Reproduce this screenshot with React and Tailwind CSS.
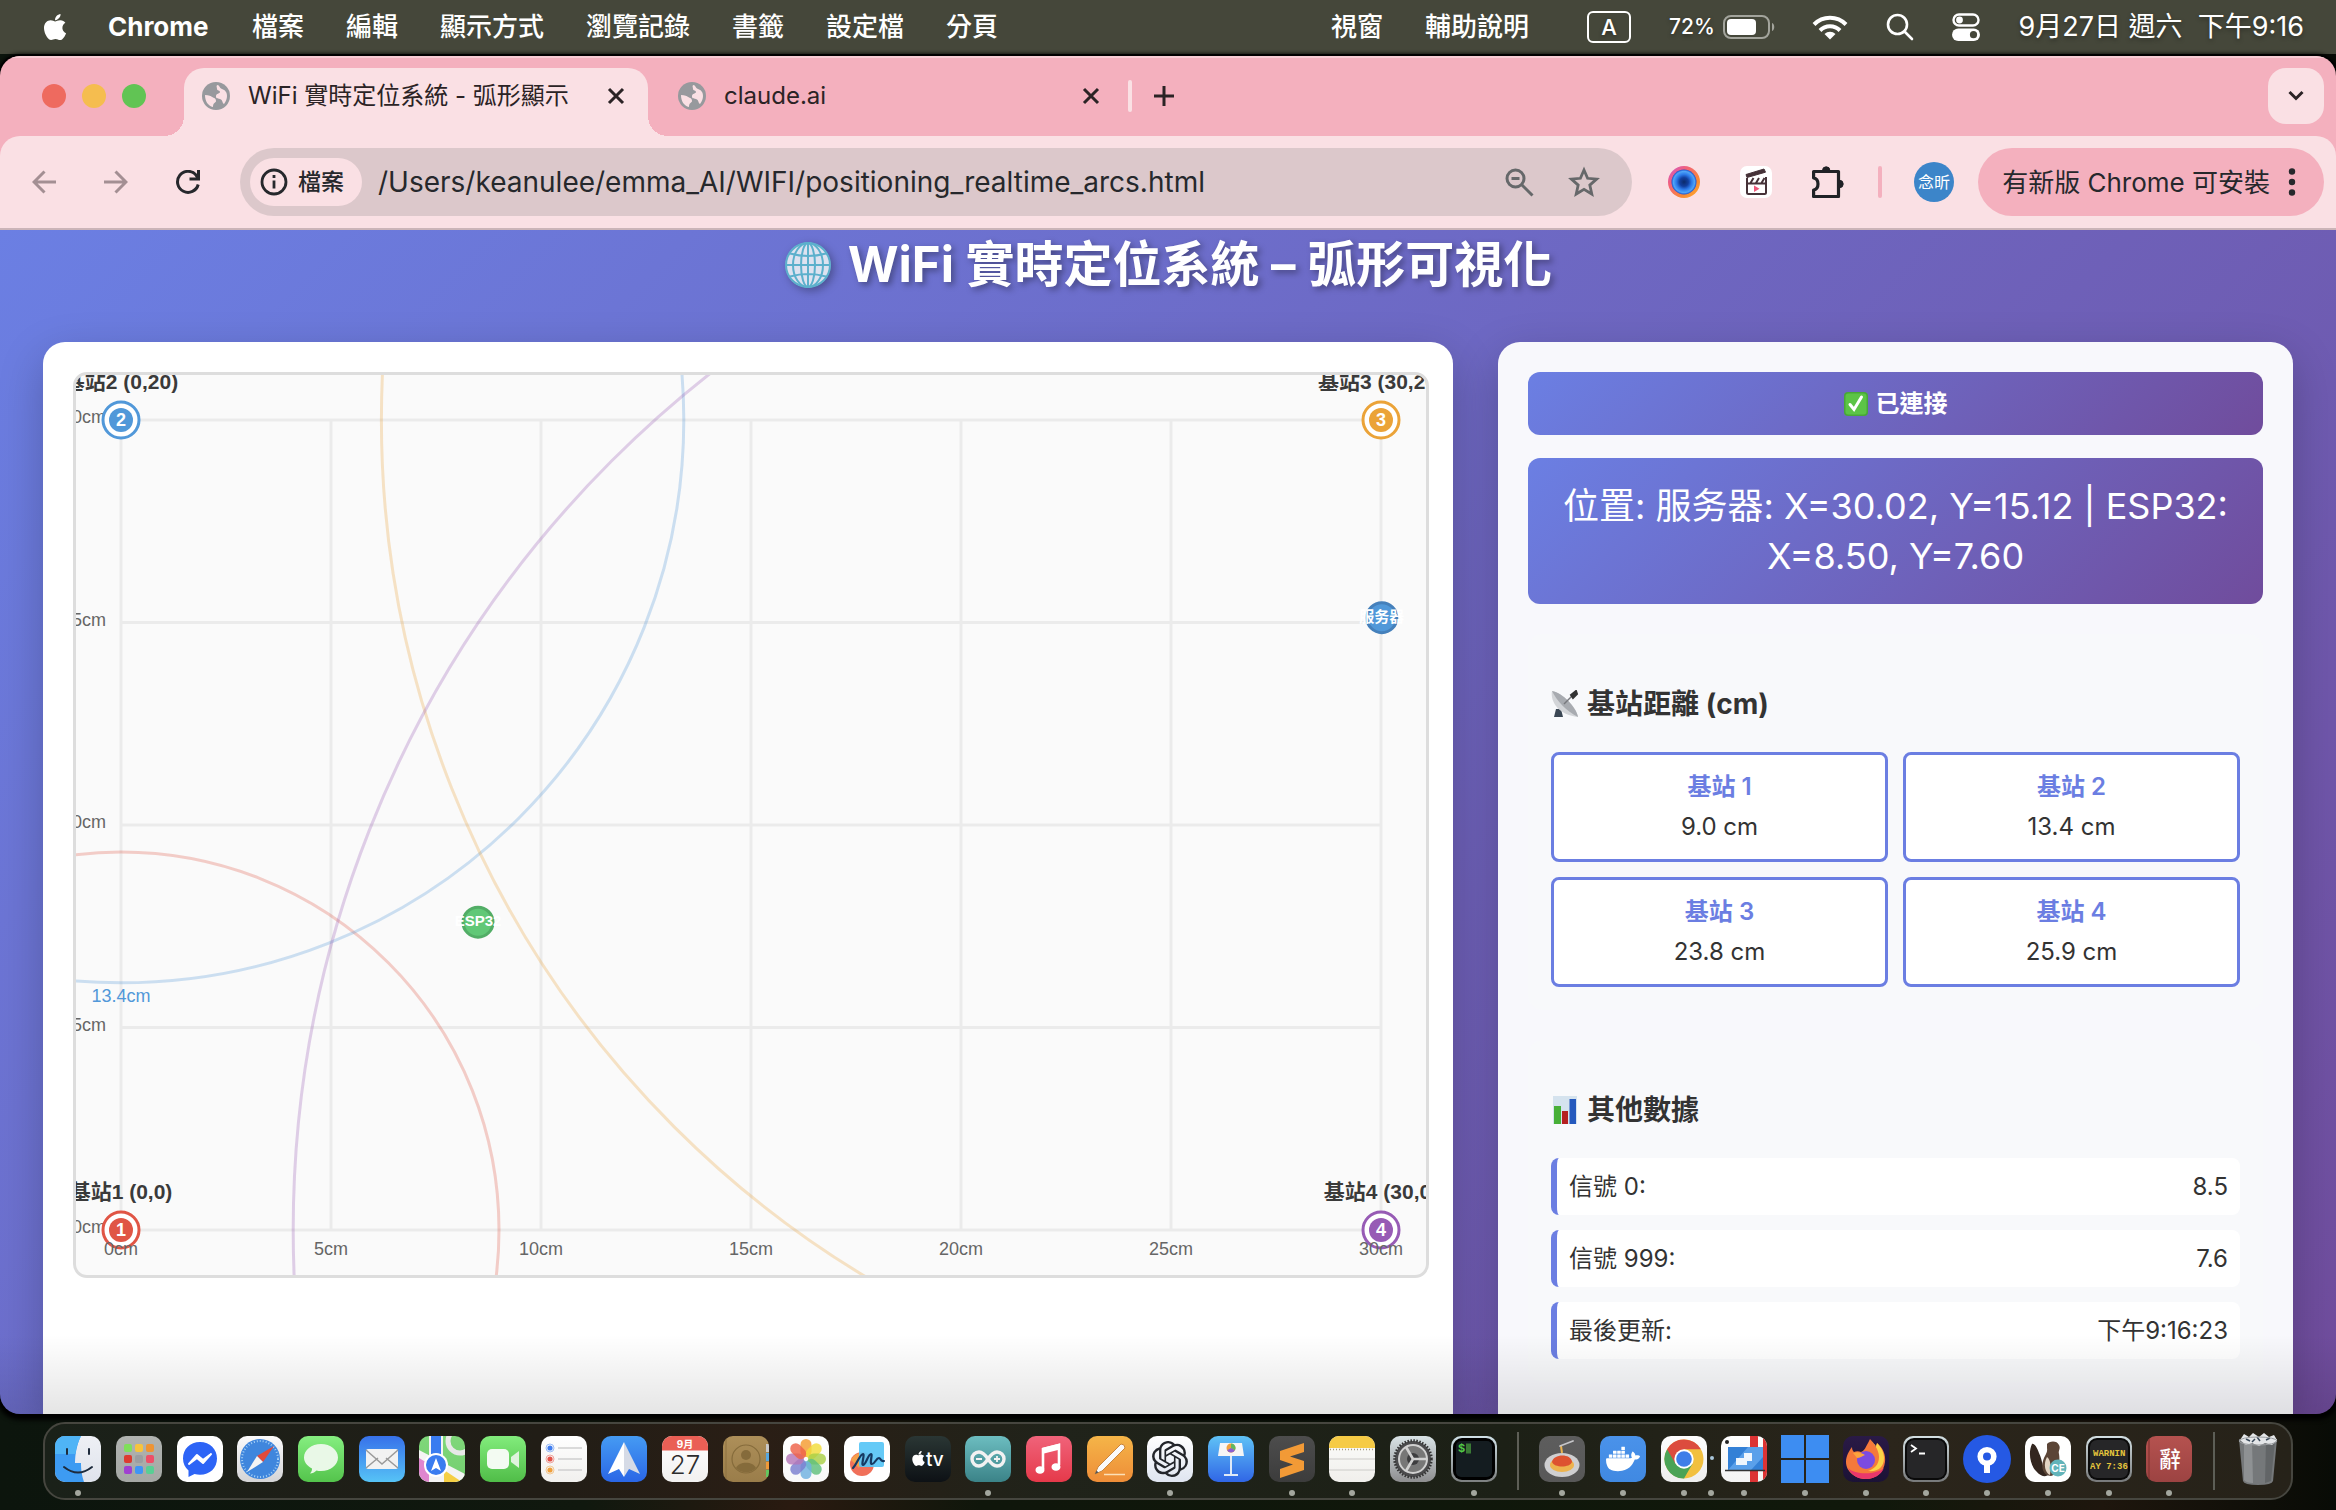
import React from "react";
import { FaApple } from "react-icons/fa";
import { SiOpenai, SiDocker } from "react-icons/si";

/* ---------- data ---------- */

const MENUS_LEFT = ["檔案", "編輯", "顯示方式", "瀏覽記錄", "書籤", "設定檔", "分頁"];
const MENUS_RIGHT = ["視窗", "輔助說明"];

const STATIONS = [
  { id: 1, x: 0, y: 0, d: 9.0, color: "#e05545", label: "基站1 (0,0)" },
  { id: 2, x: 0, y: 20, d: 13.4, color: "#5198d9", label: "基站2 (0,20)" },
  { id: 3, x: 30, y: 20, d: 23.8, color: "#eba338", label: "基站3 (30,20)" },
  { id: 4, x: 30, y: 0, d: 25.9, color: "#975bb5", label: "基站4 (30,0)" },
];

const SIGNALS = [
  ["信號 0:", "8.5"],
  ["信號 999:", "7.6"],
  ["最後更新:", "下午9:16:23"],
];

/* ---------- menu bar ---------- */

function MenuBar() {
  return (
    <header className="flex h-[54px] shrink-0 items-center bg-[#45473a] pr-8 pl-10 text-[26px] leading-[32px] font-medium text-white [text-shadow:0_2px_4px_rgba(0,0,0,.35)]">
      <FaApple className="mr-[38px] size-[30px]" aria-hidden="true" />
      <nav className="flex flex-1 items-center gap-[42px]">
        <button className="w-[102px] text-left text-[26px] font-bold">Chrome</button>
        {MENUS_LEFT.map((m) => (
          <button key={m}>{m}</button>
        ))}
      </nav>
      <nav className="mr-[58px] flex items-center gap-[42px]">
        {MENUS_RIGHT.map((m) => (
          <button key={m}>{m}</button>
        ))}
      </nav>
      <div className="flex items-center">
        <span className="flex h-8 w-11 items-center justify-center rounded-[6px] border-2 border-white text-[22px]">A</span>
        <span className="ml-[38px] w-[50px] text-[21px]">72%</span>
        <svg className="ml-1 h-6 w-[53px]" viewBox="0 0 53 24" aria-label="電池">
          <rect x="1" y="1" width="45" height="22" rx="7" fill="none" stroke="#a3a49c" strokeWidth="2" />
          <rect x="4" y="4" width="29" height="16" rx="4" fill="#fff" />
          <path d="M49 8c3 1 3 7 0 8z" fill="#a3a49c" />
        </svg>
        <svg className="ml-9 h-[26px] w-9" viewBox="0 0 36 26" aria-label="Wi-Fi">
          <g fill="none" stroke="#fff" strokeWidth="4">
            <path d="M2 10.500a22.500 22.500 0 0 1 32 0" />
            <path d="M8 16.500a14 14 0 0 1 20 0" />
          </g>
          <path d="M18 25.500l-5.500-5.500a8 8 0 0 1 11 0z" fill="#fff" />
        </svg>
        <svg className="ml-[38px] size-7" viewBox="0 0 28 28" fill="none" stroke="#fff" strokeWidth="2.600" strokeLinecap="round" aria-label="搜尋">
          <circle cx="11.500" cy="11.500" r="9.500" />
          <path d="M18.500 18.500L26 26" />
        </svg>
        <svg className="ml-[38px] h-[28px] w-7" viewBox="0 0 28 28" aria-label="控制中心">
          <rect x="1.500" y="1.500" width="25" height="11" rx="5.500" fill="none" stroke="#fff" strokeWidth="2.400" />
          <circle cx="7.500" cy="7" r="3.400" fill="#fff" />
          <rect x="0" y="15.500" width="28" height="12.500" rx="6.250" fill="#fff" />
          <circle cx="21.500" cy="21.700" r="3.600" fill="#45473a" />
        </svg>
        <time className="ml-9 w-[288px] text-right text-[27px] font-normal whitespace-nowrap">9月27日 週六&nbsp; 下午9:16</time>
      </div>
    </header>
  );
}

/* ---------- browser chrome ---------- */

function GlobeFavicon() {
  return (
    <svg className="size-7 shrink-0" viewBox="0 0 28 28" aria-hidden="true">
      <circle cx="14" cy="14" r="14" fill="#97999d" />
      <path
        d="M15 3c3 0 2 3 5 4 3 1 5 3 5 7 0 3-1 5-3 8-2-1-1-4-4-5s-4 0-4-3 4-2 4-4-3-1-3-3-1-2 0-4zM3 13c4 0 6 1 7 2 2 1 4 1 4 4 0 2-3 1-3 6C6 24 3 19 3 13z"
        fill="#fae0e4"
      />
    </svg>
  );
}

function CloseIcon() {
  return (
    <svg className="size-[18px]" viewBox="0 0 18 18" stroke="#2b2325" strokeWidth="3" fill="none" aria-hidden="true">
      <path d="M2 2l14 14M16 2L2 16" />
    </svg>
  );
}

function TabStrip() {
  return (
    <div className="flex h-20 shrink-0 items-end bg-[#f4b0be] pr-3 text-[24px] leading-[32px] text-[#2b2325] shadow-[inset_0_2px_0_#f8ccd4]">
      <div className="flex w-[184px] items-center gap-4 self-stretch pl-[42px]">
        <button aria-label="關閉視窗" className="size-6 rounded-full bg-[#ee6a5f]" />
        <button aria-label="縮到最小" className="size-6 rounded-full bg-[#f5bd4f]" />
        <button aria-label="全螢幕" className="size-6 rounded-full bg-[#61c454]" />
      </div>
      <div className="relative flex h-[68px] w-[464px] items-center rounded-t-[20px] bg-[#fae0e4] pb-3 pl-[18px]">
        <span className="absolute bottom-0 -left-5 size-5 bg-[radial-gradient(circle_at_0_0,transparent_20px,#fae0e4_20px)]" />
        <span className="absolute -right-5 bottom-0 size-5 bg-[radial-gradient(circle_at_100%_0,transparent_20px,#fae0e4_20px)]" />
        <GlobeFavicon />
        <button className="ml-[18px] flex-1 text-left whitespace-nowrap">WiFi 實時定位系統 - 弧形顯示</button>
        <button aria-label="關閉分頁" className="mr-[23px]">
          <CloseIcon />
        </button>
      </div>
      <div className="flex h-[68px] w-[480px] items-center pb-3 pl-[30px]">
        <GlobeFavicon />
        <button className="ml-[18px] flex-1 text-left">claude.ai</button>
        <button aria-label="關閉分頁" className="mr-7">
          <CloseIcon />
        </button>
      </div>
      <div className="flex h-[68px] flex-1 items-center gap-[22px] pb-3">
        <span className="h-8 w-1 rounded bg-[#fae0e4]" />
        <button aria-label="新分頁">
          <svg className="size-5" viewBox="0 0 20 20" stroke="#2b2325" strokeWidth="3" aria-hidden="true">
            <path d="M10 0v20M0 10h20" />
          </svg>
        </button>
      </div>
      <button aria-label="搜尋分頁" className="mb-3 flex size-14 items-center justify-center rounded-[18px] bg-[#fae0e4]">
        <svg className="h-3 w-4" viewBox="0 0 16 12" fill="none" stroke="#2b2325" strokeWidth="3" aria-hidden="true">
          <path d="M1.500 2L8 8.500 14.500 2" />
        </svg>
      </button>
    </div>
  );
}

function Toolbar() {
  return (
    <div className="bg-[#f4b0be]">
      <div className="flex h-[94px] shrink-0 items-center rounded-t-[20px] border-b-2 border-[#cbb4b8] bg-[#fae0e4] pr-3 pl-8 text-[#26282c]">
        <button aria-label="上一頁">
          <svg className="size-6" viewBox="0 0 24 24" fill="none" stroke="#a38f93" strokeWidth="3" aria-hidden="true">
            <path d="M24 12H2M12.500 1.500L2 12l10.500 10.500" />
          </svg>
        </button>
        <button aria-label="下一頁" className="ml-12">
          <svg className="size-6" viewBox="0 0 24 24" fill="none" stroke="#a38f93" strokeWidth="3" aria-hidden="true">
            <path d="M0 12h22M11.500 1.500L22 12 11.500 22.500" />
          </svg>
        </button>
        <button aria-label="重新載入" className="ml-12">
          <svg className="size-6" viewBox="0 0 24 24" fill="none" stroke="#26282c" strokeWidth="3" aria-hidden="true">
            <path d="M22.200 14.500A10.500 10.500 0 1 1 20 5l2 3.500" />
            <path d="M22.500 0v9h-9" />
          </svg>
        </button>
        <div className="ml-10 flex h-[68px] min-w-0 flex-1 items-center rounded-full bg-[#dcc8cb] pr-8 pl-2.5">
          <button className="flex h-12 items-center gap-2.5 rounded-full bg-[#fae0e4] pr-[18px] pl-2.5 text-[23px] font-medium">
            <svg className="size-7" viewBox="0 0 28 28" fill="none" stroke="#26282c" strokeWidth="2.800" aria-hidden="true">
              <circle cx="14" cy="14" r="12" />
              <path d="M14 12.500v8M14 7v3" />
            </svg>
            檔案
          </button>
          <input
            aria-label="網址"
            defaultValue="/Users/keanulee/emma_AI/WIFI/positioning_realtime_arcs.html"
            className="ml-4 min-w-0 flex-1 bg-transparent text-[28px] outline-none"
          />
          <button aria-label="縮小">
            <svg className="size-[30px]" viewBox="0 0 30 30" fill="none" stroke="#66686a" strokeWidth="3" aria-hidden="true">
              <circle cx="11.500" cy="11.500" r="8.500" />
              <path d="M17.500 17.500l11 11M7.500 11.500h8" />
            </svg>
          </button>
          <button aria-label="加入書籤" className="ml-[34px]">
            <svg className="size-[32px]" viewBox="0 0 32 32" fill="none" stroke="#66686a" strokeWidth="2.800" aria-hidden="true">
              <path d="M16 4l3.600 8.300 9 .8-6.800 6 2 8.900L16 23.300 8.200 28l2-8.900-6.800-6 9-.8z" />
            </svg>
          </button>
        </div>
        <button aria-label="擴充功能一" className="ml-9">
          <svg className="size-8" viewBox="0 0 32 32" aria-hidden="true">
            <defs>
              <linearGradient id="ringA" x1="0" y1="0" x2="1" y2="1">
                <stop offset="0" stopColor="#c858d8" />
                <stop offset=".3" stopColor="#f2607c" />
                <stop offset=".7" stopColor="#f98a34" />
                <stop offset="1" stopColor="#ffb02e" />
              </linearGradient>
              <radialGradient id="ringB">
                <stop offset="0" stopColor="#0b2a6b" />
                <stop offset=".35" stopColor="#123f9e" />
                <stop offset=".6" stopColor="#2b78e8" />
                <stop offset=".85" stopColor="#4fa5f8" />
                <stop offset="1" stopColor="#1f4fc8" />
              </radialGradient>
            </defs>
            <circle cx="16" cy="16" r="16" fill="url(#ringA)" />
            <circle cx="16" cy="16" r="12.500" fill="url(#ringB)" />
          </svg>
        </button>
        <button aria-label="擴充功能二" className="ml-10">
          <svg className="size-8" viewBox="0 0 32 32" aria-hidden="true">
            <rect width="32" height="32" rx="7" fill="#fff" />
            <g fill="none" stroke="#463238" strokeWidth="2">
              <path d="M26 11v15.500q0 1.500-1.500 1.500h-16Q7 28 7 26.500V12" />
              <path d="M7 17.500h19M10.500 17l3-5M16 17l3-5M21.500 17l3-5" />
            </g>
            <path d="M6 8.500L24 3l1.500 3.200L7 11.500z" fill="#463238" stroke="#463238" strokeLinejoin="round" />
            <path d="M14 19.500v6.500l5.500-3.200z" fill="#f0587a" />
          </svg>
        </button>
        <button aria-label="擴充功能" className="ml-10">
          <svg className="size-8" viewBox="0 0 32 32" fill="none" stroke="#202226" strokeWidth="3.200" strokeLinejoin="round" aria-hidden="true">
            <path d="M1.600 5.500H26.500V30.500H1.600V24C5 23.500 6 21 6 18s-1-5.500-4.400-6z" />
            <path d="M10.500 4.500a3.700 3.700 0 0 1 7.400 0zM27.500 14.300a3.700 3.700 0 0 1 0 7.400z" fill="#202226" strokeWidth="1" />
          </svg>
        </button>
        <span className="ml-[34px] h-8 w-1 rounded bg-[#f4b0be]" />
        <button className="ml-8 flex size-10 items-center justify-center rounded-full bg-[#3c85c9] text-[16px] text-white">念昕</button>
        <button className="ml-6 flex h-[68px] items-center rounded-full bg-[#f4b0be] pr-7 pl-6 text-[26px] whitespace-nowrap">
          有新版 Chrome 可安裝
          <svg className="ml-[18px] h-7 w-2" viewBox="0 0 8 28" fill="#26282c" aria-hidden="true">
            <circle cx="4" cy="3.500" r="3.200" />
            <circle cx="4" cy="14" r="3.200" />
            <circle cx="4" cy="24.500" r="3.200" />
          </svg>
        </button>
      </div>
    </div>
  );
}

/* ---------- emoji style drawings ---------- */

function GlobeEmoji() {
  return (
    <svg className="size-12 drop-shadow-[3px_3px_4px_rgba(0,0,0,.3)]" viewBox="0 0 48 48" aria-hidden="true">
      <circle cx="24" cy="24" r="22.500" fill="#dde2f0" />
      <g fill="none" stroke="#5cb0cc" strokeWidth="2">
        <circle cx="24" cy="24" r="22" />
        <ellipse cx="24" cy="24" rx="15" ry="22" />
        <ellipse cx="24" cy="24" rx="7" ry="22" />
        <path d="M24 2v44M2 24h44M6 12.500q18 5 36 0M6 35.500q18-5 36 0" />
      </g>
    </svg>
  );
}

function CheckEmoji() {
  return (
    <svg className="size-6" viewBox="0 0 24 24" aria-hidden="true">
      <rect width="24" height="24" rx="4" fill="#48a838" />
      <rect x="1.500" y="1.500" width="21" height="21" rx="3" fill="#5cc446" />
      <path d="M6 12.500l4 5L17.500 5" fill="none" stroke="#fff" strokeWidth="3" strokeLinecap="round" />
    </svg>
  );
}

function DishEmoji() {
  return (
    <svg className="size-7" viewBox="0 0 28 28" aria-hidden="true">
      <path d="M5 19l-2 8h9l-2-8z" fill="#3b4754" />
      <path d="M1 1c-2 10 6 24 26 26C25 17 12 3 1 1z" fill="#d3d5d8" />
      <path d="M1 1C6 11 15 21 27 27 25 17 12 3 1 1z" fill="#a8abb0" />
      <path d="M13 14L22 5" stroke="#77797d" strokeWidth="1.500" />
      <path d="M20 5l5-4 1 3-4 4z" fill="#333" stroke="#333" strokeWidth="2" />
    </svg>
  );
}

function ChartEmoji() {
  return (
    <svg className="size-7" viewBox="0 0 28 28" aria-hidden="true">
      <rect x="2" width="24" height="28" fill="#d5e3ee" />
      <rect x="3" y="10" width="7" height="18" fill="#48b038" />
      <rect x="11" y="15" width="6" height="13" fill="#b52020" />
      <rect x="18.500" y="3" width="6.500" height="25" fill="#2559bd" />
    </svg>
  );
}

/* ---------- positioning page ---------- */

const px = (cm) => 45 + cm * 42;
const py = (cm) => 855 - cm * 40.5;

function PositionChart() {
  return (
    <div className="overflow-hidden rounded-[14px] border-3 border-[#ddd] bg-[#fafafa]">
      <svg
        className="block w-full"
        viewBox="0 0 1350 900"
        fontFamily='"Liberation Sans", "Noto Sans CJK TC", sans-serif'
        fontSize="18"
        role="img"
        aria-label="定位圖"
      >
        <g stroke="#ebebeb" strokeWidth="3">
          {[0, 5, 10, 15, 20, 25, 30].map((v) => (
            <path key={v} d={`M${px(v)} 45V855`} />
          ))}
          {[0, 5, 10, 15, 20].map((v) => (
            <path key={v} d={`M45 ${py(v)}H1305`} />
          ))}
        </g>
        <g fill="#666">
          {[0, 5, 10, 15, 20].map((v) => (
            <text key={v} x="30" y={py(v) + 3} textAnchor="end">
              {v}cm
            </text>
          ))}
        </g>
        {STATIONS.map((s) => (
          <circle key={s.id} cx={px(s.x)} cy={py(s.y)} r={s.d * 42} fill="none" stroke={s.color} strokeOpacity=".28" strokeWidth="3" />
        ))}
        <text x="45" y="627" textAnchor="middle" fill="#5198d9">
          13.4cm
        </text>
        {STATIONS.map((s) => (
          <g key={s.id} textAnchor="middle" fontWeight="bold">
            <circle cx={px(s.x)} cy={py(s.y)} r="18" fill="#fff" stroke={s.color} strokeWidth="3" />
            <circle cx={px(s.x)} cy={py(s.y)} r="12" fill={s.color} />
            <text x={px(s.x)} y={py(s.y) + 6} fill="#fff">
              {s.id}
            </text>
            <text x={px(s.x)} y={py(s.y) - 31} fill="#3a3a3a" fontSize="21">
              {s.label}
            </text>
          </g>
        ))}
        <g fill="#666">
          {[0, 5, 10, 15, 20, 25, 30].map((v) => (
            <text key={v} x={px(v)} y="880" textAnchor="middle">
              {v}cm
            </text>
          ))}
        </g>
        <g textAnchor="middle" fontWeight="bold" fontSize="15">
          <circle cx={px(30.02)} cy={py(15.12)} r="15" fill="#5198d9" stroke="#4580bb" strokeWidth="3" />
          <text x={px(30.02)} y={py(15.12) + 4} fill="#fff">
            服务器
          </text>
          <circle cx={px(8.5)} cy={py(7.6)} r="15" fill="#61c877" stroke="#52ad66" strokeWidth="3" />
          <text x={px(8.5)} y={py(7.6) + 4} fill="#fff">
            ESP32
          </text>
        </g>
      </svg>
    </div>
  );
}

function InfoPanel() {
  return (
    <aside className="rounded-t-[22px] bg-[#f8f8fc] p-[30px] text-[24px] text-[#333] shadow-[0_15px_45px_rgba(0,0,0,.22)]">
      <p className="flex h-[63px] items-center justify-center gap-2 rounded-[12px] bg-[linear-gradient(135deg,#6b7fe3,#704c9c)] font-bold text-white">
        <CheckEmoji />
        已連接
      </p>
      <p className="mt-[23px] rounded-[12px] bg-[linear-gradient(135deg,#6b7fe3,#704c9c)] px-[22px] py-[23px] text-center text-[36px] leading-[50px] text-white">
        位置: 服务器: X=30.02, Y=15.12 | ESP32: X=8.50, Y=7.60
      </p>
      <section className="mt-[30px] rounded-[15px] bg-[#f8f9fb] p-[23px]">
        <h2 className="mt-[27px] mb-7 flex items-center gap-2 text-[28px] leading-[40px] font-bold">
          <DishEmoji />
          基站距離 (cm)
        </h2>
        <dl className="grid grid-cols-2 gap-[15px]">
          {STATIONS.map((s) => (
            <div key={s.id} className="rounded-[8px] border-3 border-[#6b7ee2] bg-white py-3 text-center leading-[40px]">
              <dt className="font-semibold text-[#6b7ee2]">基站 {s.id}</dt>
              <dd>{s.d.toFixed(1)} cm</dd>
            </div>
          ))}
        </dl>
      </section>
      <section className="mt-[30px] rounded-[15px] bg-[#f8f9fb] p-[23px]">
        <h2 className="mt-[27px] mb-7 flex items-center gap-2 text-[28px] leading-[40px] font-bold">
          <ChartEmoji />
          其他數據
        </h2>
        <dl className="flex flex-col gap-[15px]">
          {SIGNALS.map(([k, v]) => (
            <div key={k} className="flex h-[57px] items-center justify-between rounded-[8px] border-l-6 border-[#6b7ee2] bg-white px-3">
              <dt>{k}</dt>
              <dd>{v}</dd>
            </div>
          ))}
        </dl>
      </section>
    </aside>
  );
}

function Page() {
  return (
    <main className="relative flex min-h-0 flex-1 flex-col overflow-hidden bg-[linear-gradient(135deg,#6b7fe3,#704c9c)] px-[43px]">
      <h1 className="mb-[42px] flex h-[70px] shrink-0 items-center justify-center gap-4 text-[49px] font-bold text-white [text-shadow:3px_3px_6px_rgba(0,0,0,.35)]">
        <GlobeEmoji />
        WiFi 實時定位系統 – 弧形可視化
      </h1>
      <div className="grid flex-1 grid-cols-[1410fr_795fr] gap-[45px]">
        <section className="rounded-t-[22px] bg-white py-[30px] pr-6 pl-[30px] shadow-[0_15px_45px_rgba(0,0,0,.22)]">
          <PositionChart />
        </section>
        <InfoPanel />
      </div>
      <div className="pointer-events-none absolute inset-x-0 bottom-0 h-20 bg-[linear-gradient(to_top,rgba(0,0,0,.1),transparent)]" />
    </main>
  );
}

/* ---------- dock ---------- */

function Tile({ from, to, children }) {
  const id = "t" + React.useId().replace(/[^a-zA-Z0-9]/g, "");
  return (
    <svg className="size-[46px]" viewBox="0 0 46 46" aria-hidden="true">
      <defs>
        <linearGradient id={id} x1="0" y1="0" x2="0" y2="1">
          <stop offset="0" stopColor={from} />
          <stop offset="1" stopColor={to} />
        </linearGradient>
        <clipPath id={id + "c"}>
          <rect width="46" height="46" rx="10" />
        </clipPath>
      </defs>
      <g clipPath={`url(#${id}c)`}>
        <rect width="46" height="46" fill={`url(#${id})`} />
        {children}
      </g>
    </svg>
  );
}

const PETALS = ["#f49b2f", "#f2dc3a", "#a9cf45", "#5fbf7c", "#6fb1e0", "#7a7fd0", "#b576b8", "#ee6248"];
const PADS = ["#7fe05a", "#f7c43c", "#ee9433", "#dd3a30", "#9b9ea1", "#ee4f68", "#a040d0", "#3f95f5", "#58cf94"];

const Finder = (
  <Tile from="#eef0f5" to="#dfe3ec">
    <path d="M0 0h26c-4 8-6 18-6 27h6c0 8 1 13 3 19H0z" fill="#3d9bf2" />
    <path d="M0 0h26c-3 6-5 12-5.500 18H0z" fill="#4fb4f6" />
    <path d="M12 13v5M34 13v5M9 31q14 11 28 0" fill="none" stroke="#1e2b3c" strokeWidth="2" strokeLinecap="round" />
  </Tile>
);
const Launchpad = (
  <Tile from="#b0b3b0" to="#a5a8a5">
    {PADS.map((c, i) => (
      <rect key={i} x={8 + (i % 3) * 11} y={8 + Math.floor(i / 3) * 11} width="8" height="8" rx="2" fill={c} />
    ))}
  </Tile>
);
const Messenger = (
  <Tile from="#fff" to="#fff">
    <path d="M23 6C13 6 6 13 6 22.500c0 5 2 9 5.500 12V41l6-3c2 .5 3.500.8 5.500.8 10 0 17-7 17-16.300S33 6 23 6z" fill="#2d64f6" />
    <path d="M12 28l8-9 6 5 8-6-8 9-6-5z" fill="#fff" stroke="#fff" strokeWidth="2" strokeLinejoin="round" />
  </Tile>
);
const Safari = (
  <Tile from="#fbfbfb" to="#d4d4d6">
    <circle cx="23" cy="23" r="20" fill="#3f86dd" />
    <circle cx="23" cy="23" r="18" fill="none" stroke="#a5d0f5" strokeWidth="2" strokeDasharray="1 2" />
    <path d="M37 10L20 20l6 6z" fill="#e04a3c" />
    <path d="M10 36l10-16 6 6z" fill="#f4f4f4" />
  </Tile>
);
const Messages = (
  <Tile from="#85ee80" to="#54c44c">
    <path d="M23 8c9.500 0 17 6 17 13.500S32.500 35 23 35c-2 0-3-.2-4.500-.6-2 2-4 3-6.500 3.100 1.500-1.500 2-3 2-5C9 30 6 26 6 21.500 6 14 13.500 8 23 8z" fill="#e9f8e7" />
  </Tile>
);
const Mail = (
  <Tile from="#3771ea" to="#56c3f6">
    <rect x="7" y="13" width="32" height="20" rx="2" fill="#f2f2f2" />
    <path d="M7 14l16 14 16-14M7 32l12-10M39 32L27 22" fill="none" stroke="#9a9a9a" strokeWidth="1.500" />
  </Tile>
);
const Maps = (
  <Tile from="#7fd77a" to="#74cf70">
    <path d="M0 14l46 24v8H0z" fill="#f4f4f4" />
    <path d="M0 22l10 6v18H0z" fill="#df86cf" />
    <path d="M25 34l18 12H25z" fill="#f5cf45" />
    <path d="M10 0h14v46H10z" fill="#f4f4f4" />
    <path d="M12 0h10v24H12z" fill="#3a7cf0" />
    <circle cx="41" cy="5" r="12" fill="none" stroke="#e8e8e8" strokeWidth="5" />
    <circle cx="17" cy="29" r="12" fill="#fff" />
    <circle cx="17" cy="29" r="10" fill="#3a7cf0" />
    <path d="M17 22l5 13-5-3-5 3z" fill="#fff" />
  </Tile>
);
const FaceTime = (
  <Tile from="#82ec7c" to="#50bd48">
    <rect x="7" y="13" width="22" height="20" rx="5" fill="#f3fbf2" />
    <path d="M31 21l8-6v17l-8-6z" fill="#dff3dd" />
  </Tile>
);
const Reminders = (
  <Tile from="#fff" to="#f1f0ee">
    {["#3f7df0", "#e45248", "#f0a03c"].map((c, i) => (
      <g key={c}>
        <circle cx="9" cy={12 + i * 11} r="4" fill="none" stroke={c} strokeOpacity=".5" strokeWidth="1" />
        <circle cx="9" cy={12 + i * 11} r="2.600" fill={c} />
        <path d={`M17 ${12 + i * 11}H41`} stroke="#cfcfcf" strokeWidth="1.500" />
      </g>
    ))}
  </Tile>
);
const Spark = (
  <Tile from="#459bf3" to="#2a66e6">
    <path d="M23 6l16 32-11-5-5 8z" fill="#d6dbe6" />
    <path d="M23 6L7 38l11-5 5 8z" fill="#fff" />
  </Tile>
);
const Calendar = (
  <Tile from="#fff" to="#f2f1f0">
    <rect width="46" height="14.500" fill="#ea5f55" />
    <text x="23" y="11.500" fontSize="10" fontWeight="bold" fill="#fff" textAnchor="middle">
      9月
    </text>
    <text x="23" y="38" fontSize="26" fontWeight="300" fill="#2d2d2d" textAnchor="middle">
      27
    </text>
  </Tile>
);
const Contacts = (
  <Tile from="#ad8f59" to="#9a7d4a">
    <path d="M44.500 8v8" stroke="#c9c9c9" strokeWidth="3" />
    <path d="M44.500 17v8" stroke="#58a8e0" strokeWidth="3" />
    <path d="M44.500 26v7" stroke="#f09a3a" strokeWidth="3" />
    <path d="M44.500 34v7" stroke="#62c860" strokeWidth="3" />
    <path d="M3 0v46" stroke="#8c7140" strokeWidth="1" />
    <circle cx="23" cy="23" r="14" fill="none" stroke="#856b3b" strokeWidth="1.200" />
    <circle cx="23" cy="19" r="5" fill="#856b3b" />
    <path d="M13 32c3-7 17-7 20 0a14 14 0 0 1-20 0z" fill="#856b3b" />
  </Tile>
);
const Photos = (
  <Tile from="#fff" to="#f8f8f8">
    {PETALS.map((c, i) => (
      <rect key={c} x="17.500" y="3" width="11" height="18" rx="5.500" fill={c} fillOpacity=".82" transform={`rotate(${i * 45} 23 23)`} />
    ))}
  </Tile>
);
const Freeform = (
  <Tile from="#fff" to="#fff">
    <circle cx="18" cy="28" r="12" fill="#f0705a" />
    <path d="M7 24a12 12 0 0 1 16-6l-8 14z" fill="#f4a04a" />
    <rect x="15" y="6" width="25" height="25" rx="2" fill="#58c5f6" fillOpacity=".92" />
    <path d="M9 32c4-4 7-14 10-14 2 0-2 11 0 11 3 0 5-11 8-11 2 0-2 10 1 10 3 0 4-6 7-6 2 0 1 4 5 3" fill="none" stroke="#153a63" strokeWidth="2.200" strokeLinecap="round" />
  </Tile>
);
const AppleTv = (
  <Tile from="#2a3634" to="#0d1115">
    <g transform="translate(5 14)">
      <FaApple size={17} color="#fff" />
    </g>
    <text x="21" y="30" fontSize="19" fontWeight="500" fill="#fff">
      tv
    </text>
  </Tile>
);
const Arduino = (
  <Tile from="#6cbdc0" to="#3b8388">
    <g fill="none" stroke="#f2f2f2" strokeWidth="3.400">
      <path d="M23 23c-3-4.500-5.500-7-9-7a7 7 0 0 0 0 14c3.500 0 6-2.500 9-7s5.500-7 9-7a7 7 0 0 1 0 14c-3.500 0-6-2.500-9-7z" />
      <path d="M11 23h6M29 23h6M32 20v6" strokeWidth="1.800" />
    </g>
  </Tile>
);
const Music = (
  <Tile from="#f0637a" to="#e5394a">
    <path d="M17 33V13l16-4v20" fill="none" stroke="#fff" strokeWidth="2.600" />
    <path d="M16 12l18-4.500v6L16 18z" fill="#fff" />
    <ellipse cx="14" cy="34" rx="4.500" ry="3.800" fill="#fff" />
    <ellipse cx="30" cy="31" rx="4.500" ry="3.800" fill="#fff" />
  </Tile>
);
const Pages = (
  <Tile from="#f5b548" to="#ee8d38">
    <path d="M8 38l3-7L34 8q4 0 4 4L15 35z" fill="#fafafa" stroke="#c9853b" strokeWidth="1" />
    <path d="M8 38l1.500-3.500 2 2z" fill="#555" />
    <path d="M17 38.500h21" stroke="#fce0b8" strokeWidth="1.500" />
  </Tile>
);
const ChatGpt = (
  <Tile from="#fff" to="#dfe5f0">
    <g transform="translate(5 5)">
      <SiOpenai size={36} color="#23262b" />
    </g>
  </Tile>
);
const Keynote = (
  <Tile from="#5fc2f6" to="#3066e6">
    <path d="M12 7h22l2 13H10z" fill="#f5f5f5" />
    <circle cx="23" cy="12" r="4.500" fill="#f0a03c" />
    <path d="M23 12V7.500a4.500 4.500 0 0 1 3.900 6.700z" fill="#62b860" />
    <path d="M23 12l3.900 2.200a4.500 4.500 0 0 1-7.800 0z" fill="#8a5fd0" />
    <path d="M23 20v18M16 39h14" stroke="#dfe9f7" strokeWidth="2" />
  </Tile>
);
const Sublime = (
  <Tile from="#4d4d4d" to="#3c3c3c">
    <path d="M35 7v9L21 20.500 35 25v9L11 42v-9l13-4.500L11 24v-9z" fill="#f29a36" />
  </Tile>
);
const Notes = (
  <Tile from="#fcfcfa" to="#f0efec">
    <rect width="46" height="12" fill="#f6cb45" />
    <path d="M0 23h46M0 34h46" stroke="#cccbc8" strokeWidth="1" />
    <path d="M1 13.500h44" stroke="#a59d80" strokeWidth="1.500" strokeDasharray="1 2" />
  </Tile>
);
const Settings = (
  <Tile from="#d9e3e6" to="#8e8e90">
    <circle cx="23" cy="23" r="18" fill="#4b4b4d" />
    <circle cx="23" cy="23" r="18.500" fill="none" stroke="#333" strokeWidth="2.500" strokeDasharray="1.500 1.500" />
    <circle cx="23" cy="23" r="14" fill="#777" stroke="#d0d0d0" strokeWidth="2" />
    <circle cx="23" cy="23" r="6" fill="#3d3d3f" />
    <path d="M23 23h14M23 23L16 11M23 23l-7 12" stroke="#d0d0d0" strokeWidth="2.600" />
  </Tile>
);
const ITerm = (
  <Tile from="#cfe0e6" to="#7d8080">
    <rect x="2" y="2" width="42" height="42" rx="9" fill="#000" />
    <rect x="5" y="5" width="36" height="36" rx="5" fill="#141c20" />
    <text x="7" y="16" fontSize="11" fontWeight="bold" fill="#52c846">
      $
    </text>
    <rect x="15" y="7.500" width="5" height="10" fill="#3a7a35" />
  </Tile>
);
const Spaghetti = (
  <Tile from="#5d5d5d" to="#585858">
    <ellipse cx="23" cy="29" rx="17.500" ry="12" fill="#cfcfd1" />
    <ellipse cx="23" cy="29" rx="12" ry="7" fill="#edb34e" />
    <path d="M13 26c1-8 19-9 20 0-2 6-18 6-20 0z" fill="#dd5230" />
    <path d="M23 17l-1-7" stroke="#edb34e" strokeWidth="2" />
    <path d="M21 10l13-5" stroke="#c5c5c8" strokeWidth="1.800" strokeLinecap="round" />
  </Tile>
);
const Docker = (
  <Tile from="#4a92ea" to="#4089e2">
    <g transform="translate(6 6)">
      <SiDocker size={34} color="#fff" />
    </g>
  </Tile>
);
const Chrome = (
  <Tile from="#fdfdfd" to="#eee">
    <circle cx="23" cy="23" r="19.500" fill="#f2c03f" />
    <path d="M23 23L6.100 13.200A19.500 19.500 0 0 0 23 42.500l8.400-14.600z" fill="#4aa356" />
    <path d="M23 13.300h16.900A19.500 19.500 0 0 0 6.100 13.200l8.500 14.700z" fill="#dc4c3e" />
    <circle cx="23" cy="23" r="9.700" fill="#fff" />
    <circle cx="23" cy="23" r="7.800" fill="#3f7ee8" />
  </Tile>
);
const Remote = (
  <Tile from="#fff" to="#f3f3f3">
    <path d="M29 0h8v46h-8zM42 0h4v46h-4z" fill="#dc3334" />
    <rect x="7" y="11" width="35" height="23" fill="#3380d6" />
    <path d="M7 34l20-23h15v10L30 34z" fill="#5aa0ea" />
    <path d="M15 22h8v-5h8v8h-5v4h-11z" fill="#fff" fillOpacity=".9" />
    <path d="M4 34.500h40" stroke="#333" strokeWidth="1.500" />
    <circle cx="6" cy="6" r="2" fill="#222" />
  </Tile>
);
const Windows = (
  <svg className="size-[48px]" viewBox="0 0 48 48" fill="#3d8df2" aria-hidden="true">
    <path d="M0 0h23v23H0zM25 0h23v23H25zM0 25h23v23H0zM25 25h23v23H25z" />
  </svg>
);
const Firefox = (
  <Tile from="#2a1a46" to="#1b1236">
    <path d="M27 3c3 4 5 5 6 8 0-2 1-3 1-4 6 5 9 12 8 19-1 10-9 17-19 17S3 36 3 26c0-6 3-11 6-15 0 3 1 4 2 5 2-1 5-1 7 0 3-1 4-3 9-13z" fill="#f5793b" />
    <path d="M27 3c3 4 9 10 9 18 0 8-5 12-11 14 10 1 16-4 16-13 0-6-3-11-7-15 0 1-1 2-1 4-1-3-3-4-6-8z" fill="#fbd347" />
    <path d="M5 32c4 8 10 11 18 11s15-4 18-11c-6 6-28 8-36 0z" fill="#e9376b" />
    <circle cx="23" cy="24" r="9" fill="#7c4be0" />
    <path d="M10 17c5-2 9 0 12 2-3 1-5 3-8 3z" fill="#fca33c" />
  </Tile>
);
const Terminal = (
  <Tile from="#d3dfe2" to="#77797a">
    <rect x="2" y="2" width="42" height="42" rx="9" fill="#0a0a0a" />
    <rect x="4" y="4" width="38" height="38" rx="7" fill="#262628" />
    <path d="M8 9l5 3.500L8 16M16 17.500h6" fill="none" stroke="#fff" strokeWidth="1.800" />
  </Tile>
);
const Sourcetree = (
  <svg className="size-[48px]" viewBox="0 0 48 48" aria-hidden="true">
    <circle cx="24" cy="24" r="24" fill="#2559e4" />
    <circle cx="24" cy="21.500" r="6.800" fill="none" stroke="#fff" strokeWidth="5.600" />
    <path d="M21 28h6v10h-6z" fill="#fff" />
  </svg>
);
const Beaver = (
  <Tile from="#fff" to="#fff">
    <path d="M7 8c-4 8-2 21 4 27 5 6 10 6 12 4-6-6-5-14-9-22C12 11 9 7 7 8z" fill="#33261f" />
    <path d="M22 8c2-3 10-4 12 1 2 4-1 5 0 9 1 6 1 20-8 22-8 0-10-9-8-15 1-5 5-8 4-13z" fill="#5b4537" />
    <path d="M22 21c4 3 4 10 3 18-5-2-7-11-3-18z" fill="#e3d5c4" />
    <circle cx="33" cy="32" r="8.500" fill="#62b4ba" />
    <text x="33" y="36" fontSize="10" fontWeight="bold" fill="#fff" textAnchor="middle">
      CE
    </text>
  </Tile>
);
const Console = (
  <Tile from="#d3dfe2" to="#77797a">
    <rect x="2" y="2" width="42" height="42" rx="9" fill="#0a0a0a" />
    <rect x="4" y="4" width="38" height="38" rx="7" fill="#262628" />
    <g fill="#e5c53c" fontSize="9" fontFamily='"Liberation Mono", monospace' fontWeight="bold">
      <text x="7" y="20">
        WARNIN
      </text>
      <text x="4" y="33">
        AY 7:36
      </text>
    </g>
  </Tile>
);
const Dictionary = (
  <Tile from="#b5524f" to="#9c4342">
    <path d="M3 0v46" stroke="#8a3735" strokeWidth="1.500" />
    <text x="24" y="31" fontSize="22" fontWeight="500" fill="#fff" textAnchor="middle">
      辭
    </text>
  </Tile>
);
const Trash = (
  <svg className="h-[54px] w-[42px]" viewBox="0 0 42 54" aria-hidden="true">
    <path d="M2 7h38l-4 42q-1 4-15 4T6 49z" fill="#75787a" />
    <path d="M7 9h8l1 42q-7 0-9-3z" fill="#8e9193" />
    <path d="M29 9h9l-4 40-6 2z" fill="#626567" />
    <path d="M3 8l4-6 5 3 4-4 6 4 5-4 5 4 5-2 3 5-5 5-7-2-6 3-7-3-6 2z" fill="#e4e6e8" />
    <path d="M9 7l4 2M20 5l3 4M29 8l4-2M15 10l3-3" stroke="#3a4a5a" strokeWidth="1.500" />
    <ellipse cx="21" cy="9" rx="19" ry="4" fill="none" stroke="#9a9da0" strokeWidth="1" />
  </svg>
);

const DOCK_LEFT = [
  ["Finder", Finder, true],
  ["啟動台", Launchpad],
  ["Messenger", Messenger],
  ["Safari", Safari],
  ["訊息", Messages],
  ["郵件", Mail],
  ["地圖", Maps],
  ["FaceTime", FaceTime],
  ["提醒事項", Reminders],
  ["Spark", Spark],
  ["行事曆", Calendar],
  ["聯絡資訊", Contacts],
  ["照片", Photos],
  ["無邊記", Freeform],
  ["Apple TV", AppleTv],
  ["Arduino", Arduino, true],
  ["音樂", Music],
  ["Pages", Pages],
  ["ChatGPT", ChatGpt, true],
  ["Keynote", Keynote],
  ["Sublime Text", Sublime, true],
  ["備忘錄", Notes, true],
  ["系統設定", Settings],
  ["iTerm", ITerm, true],
];
const DOCK_RIGHT = [
  ["Spaghetti", Spaghetti, true],
  ["Docker", Docker, true],
  ["Google Chrome", Chrome, true],
  ["Remote", Remote, true],
  ["Windows", Windows, true],
  ["Firefox", Firefox, true],
  ["終端機", Terminal, true],
  ["Sourcetree", Sourcetree, true],
  ["DBeaver", Beaver, true],
  ["系統監視程式", Console, true],
  ["辭典", Dictionary, true],
];

function DockItem({ name, icon, running }) {
  return (
    <button aria-label={name} className="relative flex h-full min-w-0 flex-1 items-center justify-center pb-1">
      {icon}
      {running && <span className="absolute bottom-0.5 left-1/2 size-1.5 -translate-x-1/2 rounded-full bg-[#a3a69e]" />}
      {name === "Google Chrome" && (
        <>
          <span className="absolute top-8 right-0 size-1 rounded-full bg-[#a9c6da]" />
          <span className="absolute right-0 bottom-0.5 size-1.5 rounded-full bg-[#a3a69e]" />
        </>
      )}
    </button>
  );
}

function Dock() {
  return (
    <footer className="mx-[43px] mt-2 mb-2.5 flex h-[78px] shrink-0 items-center rounded-[22px] border-2 border-[#46463f] bg-[linear-gradient(90deg,#1a2119_0%,#211d16_22%,#2a1e15_32%,#20231a_45%,#1c2016_65%,#2b251b_82%,#262219_100%)] px-[3px]">
      {DOCK_LEFT.map(([n, i, r]) => (
        <DockItem key={n} name={n} icon={i} running={r} />
      ))}
      <span className="mx-[13px] h-[58px] w-0.5 bg-[#5d5e56]" />
      {DOCK_RIGHT.map(([n, i, r]) => (
        <DockItem key={n} name={n} icon={i} running={r} />
      ))}
      <span className="mx-[13px] h-[58px] w-0.5 bg-[#5d5e56]" />
      <DockItem name="垃圾桶" icon={Trash} />
    </footer>
  );
}

export default function App() {
  return (
    <div
      lang="zh-Hant"
      className="flex h-screen flex-col overflow-hidden bg-[linear-gradient(90deg,#0c150d_0%,#10180e_25%,#2a1a10_34%,#0f160b_42%,#10180b_80%,#1e160d_90%,#080b06_100%)] font-['Inter','Noto_Sans_CJK_TC',sans-serif]"
    >
      <MenuBar />
      <div className="mt-0.5 flex min-h-0 flex-1 flex-col overflow-hidden rounded-[20px] shadow-[0_0_0_2px_#000,0_2px_4px_4px_#000]">
        <TabStrip />
        <Toolbar />
        <Page />
      </div>
      <Dock />
    </div>
  );
}
